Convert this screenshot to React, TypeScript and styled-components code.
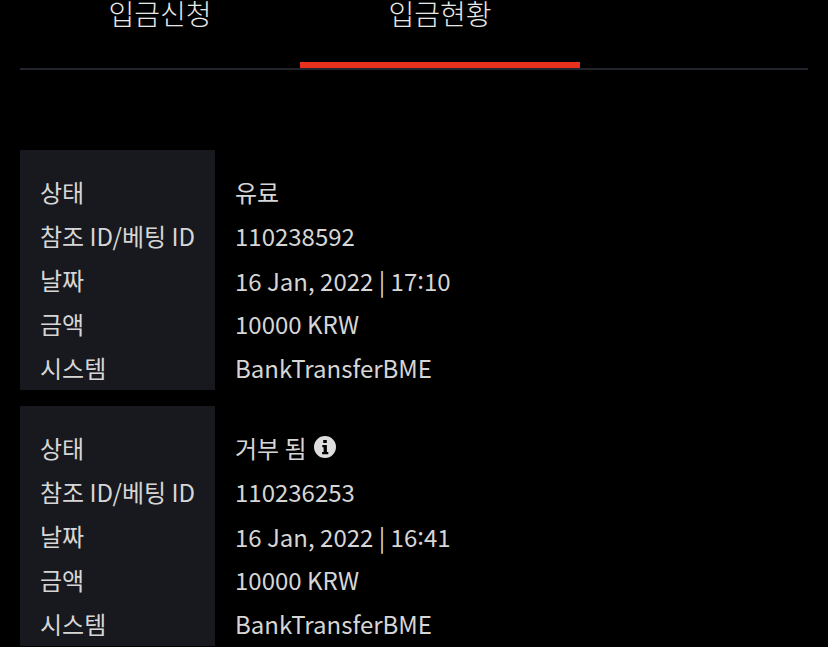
import React from 'react';
import styled, { createGlobalStyle } from 'styled-components';

const GlobalStyle = createGlobalStyle`
  html, body {
    margin: 0;
    padding: 0;
    height: 100%;
    overflow: hidden;
    background: #000;
  }
  body {
    font-family: "Noto Sans CJK KR", "Noto Sans", sans-serif;
    color: #d6d6d6;
  }
`;

const Wrapper = styled.div`
  padding: 0 20px;
  height: 647px;
  overflow: hidden;
`;

const Tabs = styled.div`
  display: flex;
  height: 70px;
  border-bottom: 2px solid #22252e;
  box-sizing: border-box;
  margin-bottom: 80px;
`;

const Tab = styled.div<{ $active?: boolean }>`
  width: 280px;
  height: 68px;
  box-sizing: border-box;
  text-align: center;
  font-size: 28px;
  font-weight: 300;
  line-height: 26px;
  color: #e8e8e8;
  border-bottom: 6px solid ${(props) => (props.$active ? '#e8301f' : 'transparent')};
`;

const Cards = styled.div`
  display: flex;
  flex-direction: column;
  gap: 16px;
`;

const Card = styled.div`
  display: flex;
  height: 240px;
`;

const LabelColumn = styled.div`
  width: 195px;
  box-sizing: border-box;
  padding: 20px 0 0 20px;
  background: #17191e;
`;

const ValueColumn = styled.div`
  padding: 20px 0 0 20px;
`;

const Row = styled.div`
  display: flex;
  align-items: center;
  gap: 7px;
  height: 44px;
  font-size: 24px;
  font-weight: 400;
  line-height: 44px;
  white-space: nowrap;
`;

const Colon = styled.span`
  vertical-align: 2px;
`;

const InfoIcon = styled.svg`
  width: 22px;
  height: 22px;
  margin-top: -2px;
  fill: #dedede;
  flex: none;
`;

function Info() {
  return (
    <InfoIcon viewBox="0 0 22 22">
      <path
        fillRule="evenodd"
        d="M11 0a11 11 0 1 0 0 22a11 11 0 0 0 0-22zM9.2 3.9h3.6v3.2H9.2zM8.3 9h4.6v7h1.4v2.2H8.1V16h1.5v-4.8H8.3z"
      />
    </InfoIcon>
  );
}

interface IDeposit {
  status: string;
  rejected?: boolean;
  id: string;
  date: string;
  hour: string;
  minute: string;
  amount: string;
  system: string;
}

const deposits: IDeposit[] = [
  {
    status: '유료',
    id: '110238592',
    date: '16 Jan, 2022 | ',
    hour: '17',
    minute: '10',
    amount: '10000 KRW',
    system: 'BankTransferBME',
  },
  {
    status: '거부 됨',
    rejected: true,
    id: '110236253',
    date: '16 Jan, 2022 | ',
    hour: '16',
    minute: '41',
    amount: '10000 KRW',
    system: 'BankTransferBME',
  },
];

const labels = ['상태', '참조 ID/베팅 ID', '날짜', '금액', '시스템'];

function App() {
  return (
    <Wrapper>
      <GlobalStyle />
      <Tabs>
        <Tab>입금신청</Tab>
        <Tab $active>입금현황</Tab>
      </Tabs>
      <Cards>
        {deposits.map((item) => (
          <Card key={item.id}>
            <LabelColumn>
              {labels.map((label) => (
                <Row key={label}>{label}</Row>
              ))}
            </LabelColumn>
            <ValueColumn>
              <Row>
                {item.status}
                {item.rejected ? <Info /> : null}
              </Row>
              <Row>{item.id}</Row>
              <Row>
                <span>
                  {item.date}
                  {item.hour}
                  <Colon>:</Colon>
                  {item.minute}
                </span>
              </Row>
              <Row>{item.amount}</Row>
              <Row>{item.system}</Row>
            </ValueColumn>
          </Card>
        ))}
      </Cards>
    </Wrapper>
  );
}
export default App;
